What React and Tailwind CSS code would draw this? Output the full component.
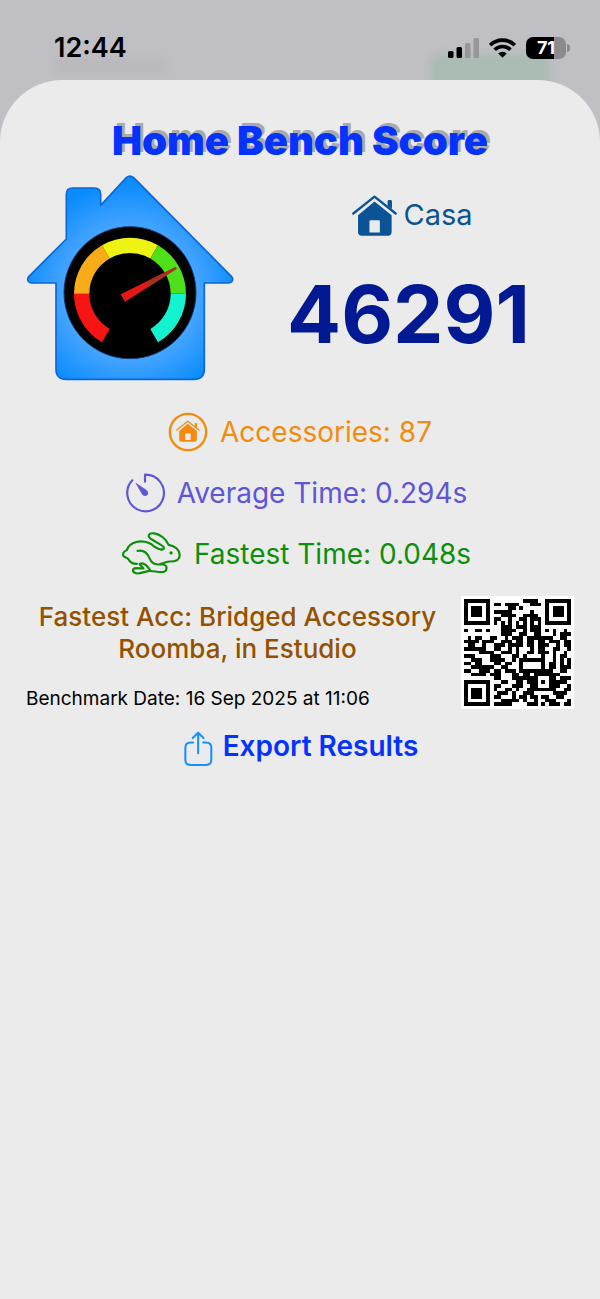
const QR_ROWS = [
  '11111110000000001111001111111',
  '10000010110111100011101000001',
  '10111010000011010000001011101',
  '10111010111110000010001011101',
  '10111010001111001111001011101',
  '10000010110010011011101000001',
  '11111110101010101010101111111',
  '00000000001110111011100000000',
  '10011010001111001011101010010',
  '00000000001110011001100010111',
  '01011001100101110111111100110',
  '11110111001110110110110111011',
  '01100100111011110110111001011',
  '11111100110010100010110011001',
  '00001111001110100110111010010',
  '11100001110001101000010010110',
  '00111001111001011111110010101',
  '11011000110110010000010110101',
  '00111111001100010000010110111',
  '11001110110111011111111100110',
  '00111101110001101101111111000',
  '00000000110001111111000110111',
  '11111110001100110111010111110',
  '10000010110001110011000111001',
  '10111010100110100111111110011',
  '10111010011101001110000011110',
  '10111010110001011011011001100',
  '10000010001111101001001110001',
  '11111110111110000111010111011',
]

function QrCode() {
  const cells = QR_ROWS.flatMap((row, y) =>
    row.split('').map((bit, x) => (bit === '1' ? `M${x} ${y}h1v1h-1z` : ''))
  )
  return (
    <svg viewBox="0 0 29 29" className="w-full" shapeRendering="crispEdges" role="img" aria-label="QR code">
      <path d={cells.join('')} fill="#000" />
    </svg>
  )
}

function HouseGauge() {
  return (
    <svg viewBox="0 0 690 675" className="w-[230px] shrink-0" aria-hidden="true">
      <defs>
        <radialGradient id="house" gradientUnits="userSpaceOnUse" cx="345" cy="383" r="330">
          <stop offset="0.5" stopColor="#55aaff" />
          <stop offset="1" stopColor="#0a8cff" />
        </radialGradient>
      </defs>
      <path
        d="M334 38Q345 29 356 38L649 334Q656 342 651 349Q648 354 640 354H568V612Q568 643 537 643H154Q123 643 123 612V354H50Q42 354 39 348Q36 341 42 334L154 222V88Q154 69 173 69H238Q257 69 257 88V121Z"
        fill="url(#house)"
        stroke="#0d66d8"
        strokeWidth="5"
        strokeLinejoin="round"
      />
      <circle cx="345" cy="383" r="198" fill="#000" stroke="#123a70" strokeWidth="3" />
      <g fill="none" strokeWidth="46">
        <path d="M272.5 511.6A145 145 0 0 1 200 386" stroke="#f91414" />
        <path d="M200 386A145 145 0 0 1 272.5 260.4" stroke="#f8ac18" />
        <path d="M272.5 260.4A145 145 0 0 1 417.5 260.4" stroke="#eef314" />
        <path d="M417.5 260.4A145 145 0 0 1 490 386" stroke="#4fe01b" />
        <path d="M490 386A145 145 0 0 1 417.5 511.6" stroke="#13f3cf" />
      </g>
      <path d="M317 388L482 306L485 311L330 410Z" fill="#e61717" />
      <path d="M400 347L482 306L485 311L400 366Z" fill="#a5321c" />
    </svg>
  )
}

function HomeShape() {
  return (
    <>
      <path d="M4 55L67 5L130 55" fill="none" stroke="currentColor" strokeWidth="7" strokeLinecap="round" strokeLinejoin="round" />
      <path d="M106 19Q106 15 110 15H115Q119 15 119 19V42L106 32Z" fill="currentColor" />
      <path
        fillRule="evenodd"
        d="M67 19L118 60V110Q118 121 107 121H29Q18 121 18 110V60ZM55 75Q52 75 52 78V112H83V78Q83 75 80 75Z"
        fill="currentColor"
      />
    </>
  )
}

function HomeIcon() {
  return (
    <svg viewBox="0 0 134 122" className="w-[45px]" aria-hidden="true">
      <HomeShape />
    </svg>
  )
}

function HomeCircleIcon() {
  return (
    <svg viewBox="0 0 120 120" className="w-10" aria-hidden="true">
      <circle cx="60" cy="60" r="54.5" fill="none" stroke="currentColor" strokeWidth="7" />
      <g transform="translate(24 25) scale(0.53)">
        <HomeShape />
      </g>
    </svg>
  )
}

function TimerIcon() {
  return (
    <svg viewBox="44 221 120 120" className="w-10" aria-hidden="true">
      <path d="M104 247V226A55 55 0 1 1 66 243" fill="none" stroke="currentColor" strokeWidth="6.5" strokeLinecap="round" strokeLinejoin="round" />
      <path d="M77 252L110 274Q115 282 110 287Q104 292 97 286Z" fill="currentColor" stroke="currentColor" strokeWidth="2" strokeLinejoin="round" />
    </svg>
  )
}

function HareIcon() {
  return (
    <svg viewBox="30 390 184 136" className="w-[61px]" aria-hidden="true">
      <g fill="none" stroke="currentColor" strokeWidth="6.5" strokeLinecap="round" strokeLinejoin="round">
        <path d="M153 446C140 444 128 436 121 429C91 413 55 424 48 447C38 451 33 460 38 466C42 470 50 471 53 476C58 487 69 489 78 489" />
        <path d="M153 446C164 443 160 437 149 431L122 415C107 405 114 395 130 397C149 399 166 415 174 432C194 435 207 448 207 463C207 477 195 482 178 482C165 482 160 488 148 490" />
        <path d="M80 450C98 446 110 458 116 472C121 485 131 491 141 491H156C172 491 172 514 151 514C136 514 126 509 112 511C96 514 89 519 77 518C62 515 63 503 76 502L98 503L86 490C94 484 104 490 112 500L118 509" />
      </g>
      <circle cx="181" cy="456" r="5" fill="currentColor" />
    </svg>
  )
}

function ShareIcon() {
  return (
    <svg viewBox="44 34 86 106" className="mt-[6px] w-[29px] text-[#1490ff]" aria-hidden="true">
      <g fill="none" stroke="currentColor" strokeWidth="6" strokeLinecap="round" strokeLinejoin="round">
        <path d="M71 68H64Q48 68 48 84V119Q48 135 64 135H109Q125 135 125 119V84Q125 68 109 68H101" />
        <path d="M86 100V39M70 55L86 39L102 55" />
      </g>
    </svg>
  )
}

function StatusBar() {
  return (
    <div className="relative flex h-20 items-center justify-between pt-4 pr-[30px] pl-[54px]">
      {/* blurred remains of the screen behind the sheet */}
      <div className="absolute top-[58px] left-[54px] h-4 w-28 rounded bg-[#b9b9bd] blur-[5px]" />
      <div className="absolute top-[54px] right-[50px] h-12 w-[120px] rounded-xl bg-[#a9bbb3] blur-[4px]" />

      <span className="relative text-[27px] leading-8 font-semibold text-black">12:44</span>
      <div className="relative flex items-center gap-[10px]">
        <svg viewBox="0 0 31 20" className="w-[31px]" aria-hidden="true">
          <rect x="0" y="13" width="5.5" height="7" rx="1.5" />
          <rect x="8.5" y="9" width="5.5" height="11" rx="1.5" />
          <rect x="17" y="5" width="5.5" height="15" rx="1.5" fill="#97979b" />
          <rect x="25.5" y="0" width="5.5" height="20" rx="1.5" fill="#97979b" />
        </svg>
        <svg viewBox="0 0 27 20" className="w-[27px]" aria-hidden="true">
          <g fill="none" stroke="#000" strokeWidth="3.6">
            <path d="M1.2 7.2A17.5 17.5 0 0 1 25.8 7.2" />
            <path d="M5.6 11.7A11.2 11.2 0 0 1 21.4 11.7" />
          </g>
          <path d="M13.5 19.8L9.2 15.4A6.2 6.2 0 0 1 17.8 15.4Z" />
        </svg>
        <div className="flex items-center gap-px">
          <div className="flex h-[22px] w-10 items-center justify-center rounded-[7px] bg-linear-to-r from-black from-70% to-[#8b8b8f] to-70% text-[18px] leading-5 font-bold text-white">
            71
          </div>
          <div className="h-2 w-[3px] rounded-r-full bg-[#8b8b8f]" />
        </div>
      </div>
    </div>
  )
}

const stats = [
  { icon: <HomeCircleIcon />, text: 'Accessories: 87', className: 'text-[#f28c0f]' },
  { icon: <TimerIcon />, text: 'Average Time: 0.294s', className: 'pr-2 text-[#5e56d6]' },
  { icon: <HareIcon />, text: 'Fastest Time: 0.048s', className: 'pr-2 text-[#0c8f0c]' },
]

export default function App() {
  return (
    <div className="flex min-h-screen flex-col bg-[#c0bfc4] font-['Inter',sans-serif]">
      <StatusBar />

      <main className="relative flex-1 rounded-t-[62px] bg-[#ebebeb] pt-9">
        <h1 className="text-center text-[40px] leading-[49px] font-black text-[#0432ff] [text-shadow:3px_-3px_0_#aaaaaa]">
          Home Bench Score
        </h1>

        <div className="flex pr-7 pl-[15px]">
          <HouseGauge />
          <div className="flex flex-1 flex-col items-center pt-[30px]">
            <div className="flex items-center gap-[6px] pl-2 text-[29px] leading-10 text-[#0b5394]">
              <HomeIcon />
              Casa
            </div>
            <div className="mt-7 text-[80px] leading-[100px] font-bold text-[#011993]">46291</div>
          </div>
        </div>

        <ul className="mt-[11px]">
          {stats.map((stat) => (
            <li key={stat.text} className={`flex h-[61px] items-center justify-center gap-3 text-[28px] ${stat.className}`}>
              {stat.icon}
              {stat.text}
            </li>
          ))}
        </ul>

        <div className="mt-3 flex justify-between px-[26px]">
          <div className="flex-1 pt-[5px]">
            <p className="pr-3 text-center text-[26px] leading-8 font-medium text-[#945200]">
              Fastest Acc: Bridged Accessory
              <br />
              Roomba, in Estudio
            </p>
            <p className="mt-5 text-[19px] leading-7 text-black">Benchmark Date: 16 Sep 2025 at 11:06</p>
          </div>
          <div className="w-[113px] shrink-0 self-start bg-white p-[3px]">
            <QrCode />
          </div>
        </div>

        <div className="mt-3 flex justify-center pl-[2px]">
          <button type="button" className="flex items-center gap-[10px] text-[28px] leading-9 font-semibold text-[#0432ff]">
            <ShareIcon />
            Export Results
          </button>
        </div>
      </main>
    </div>
  )
}
